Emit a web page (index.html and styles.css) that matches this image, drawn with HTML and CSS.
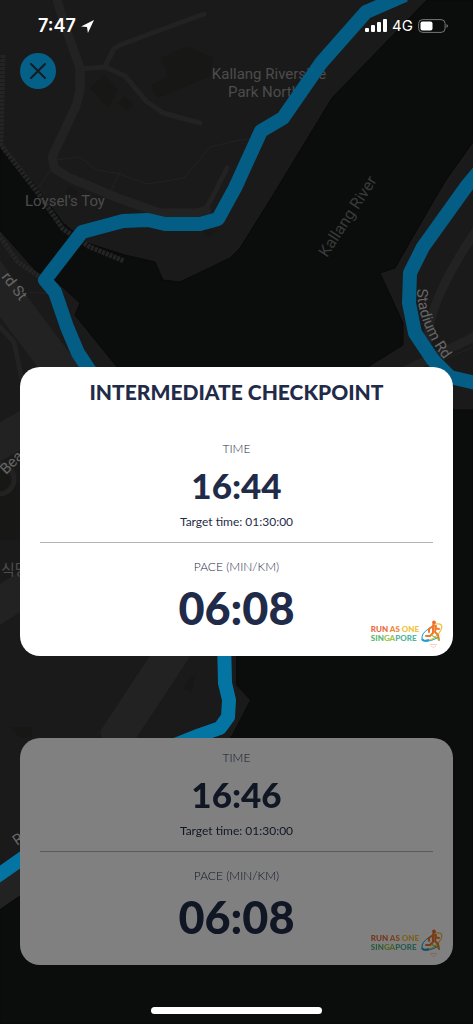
FILE: index.html
```html
<!DOCTYPE html>
<html lang="en">
<head>
<meta charset="utf-8">
<meta name="viewport" content="width=device-width, initial-scale=1">
<title>Intermediate checkpoint</title>
<link rel="stylesheet" href="styles.css">
</head>
<body>
<div class="screen">
  <svg class="map" viewBox="0 0 473 1024" preserveAspectRatio="xMidYMin slice" role="img" aria-label="Map of the route">
    <rect class="land" width="473" height="1024"/>
    <path class="building" d="M161 58L187 46 213 58 210 76 158 98 151 86 168 76ZM104 75L118 90 108 108 90 88ZM124 96L134 104 128 111 118 104ZM192 677L204 670 210 680 202 698 183 688ZM10 727H32V738H20ZM0 470L20 485V540H0ZM68 187L78 190 76 195 65 194ZM200 229L218 230 208 237Z"/>
    <path class="water" d="M427 0L332 98 270 200 240 248 230 258 180 282 163 280 155 262 125 255 87 243 63 223 33 183 0 147V230L38 273 57 282 80 303 75 315 117 367 220 500 236 656V685L250 700 232 735 200 770 20 895 0 910V1024H473V410H455L366 368 403 345V323L380 273 395 268 430 207 446 180 473 142V0Z"/>
    <path class="land" d="M200 656H236V685L250 700 232 735 226 742H180Z"/>
    <g class="roads">
      <path class="road-l" d="M57 0L63 20 80 68V90L76 106 52 157 55 169 70 178 118 198 160 213H195L207 210"/>
      <path class="road-m" d="M80 69L105 67 125 76 146 101 163 113 200 123M105 66L114 49 120 45 204 14M205 210L212 198 227 168"/>
      <path class="road-s" d="M55 160L80 157 97 170 120 174 147 184 184 178 210 147 240 140 266 137M50 171L38 188M120 172L110 193M62 295L30 292"/>
      <path class="road-xl" d="M-14 270L76 390M-10 448L38 420M-8 610L45 575M174 650L118 735M-10 895L65 845"/>
      <path class="road-m" d="M-2 325L14 342 22 380M-2 494A15 15 0 0 0 0 464"/>
      <path class="road-l" d="M428 340Q428 300 480 225M390 378L480 334"/>
      <path class="road-s" d="M373 390L480 344M155 656L98 735"/>
    </g>
    <path class="rail" d="M3 55L1 145 38 193 63 229 90 247 124 261M-2 234L18 262 40 277"/>
    <g class="place" text-anchor="middle">
      <text x="269" y="79">Kallang Riverside</text>
      <text x="264" y="97">Park North</text>
      <text x="65" y="206">Loysel's Toy</text>
    </g>
    <text class="river" transform="translate(327 258) rotate(-57)">Kallang River</text>
    <text class="street" transform="translate(1 277) rotate(52)">rd St</text>
    <text class="street" transform="translate(6 475) rotate(-45)">Bea</text>
    <text class="place" x="1" y="575">식당</text>
    <text class="street" transform="translate(17 846) rotate(-35)">Rd</text>
    <path class="route" d="M405 -5L366 12 321 63 283 118 261 131 235 188 218 219 200 224H165L148 220 123 221 82 232 45 280 55 292 67 327 78 353 96 380"/>
    <path class="route" d="M480 170L466 187 423 247 410 273 409 303 415 333 433 360 450 377 480 384"/>
    <path class="route route-lower" d="M224 640L225 683 229 700 228 717 220 728 200 735 170 747M-10 881L40 846"/>
    <path id="stadium" class="guide" d="M417 289Q417 331 458 377"/>
    <text class="street"><textPath href="#stadium">Stadium Rd</textPath></text>
  </svg>

  <header class="status">
    <div class="clock">
      <time>7:47</time>
      <svg width="13" height="13" viewBox="0 0 13 13" aria-hidden="true"><path fill="currentColor" d="M13 0L0 6.600 6 7 6.900 13Z"/></svg>
    </div>
    <div class="signals">
      <svg width="22" height="14" viewBox="0 0 22 14" aria-hidden="true"><path fill="currentColor" d="M1 9h2q1 0 1 1v2q0 1-1 1H1q-1 0-1-1v-2q0-1 1-1ZM7 6h2q1 0 1 1v5q0 1-1 1H7q-1 0-1-1V7q0-1 1-1ZM13 3h2q1 0 1 1v8q0 1-1 1h-2q-1 0-1-1V4q0-1 1-1ZM19 0h2q1 0 1 1v11q0 1-1 1h-2q-1 0-1-1V1q0-1 1-1Z"/></svg>
      <span>4G</span>
      <svg width="31" height="14" viewBox="0 0 31 14" aria-hidden="true"><rect x=".6" y=".6" width="26.500" height="12.800" rx="4" fill="none" stroke="#777"/><rect x="2.500" y="2.500" width="12" height="9" rx="2" fill="currentColor"/><path d="M28.500 5v4q3-2 0-4Z" fill="#777"/></svg>
    </div>
  </header>

  <nav class="toolbar">
    <button class="close" type="button" aria-label="Close">
      <svg width="16" height="16" viewBox="0 0 16 16" aria-hidden="true"><path d="M1 1L15 15M15 1L1 15"/></svg>
    </button>
  </nav>

  <main class="cards">
    <article class="card">
      <h1 class="title">INTERMEDIATE CHECKPOINT</h1>
      <section class="metric">
        <h2 class="label">TIME</h2>
        <p class="value">16:44</p>
        <p class="target">Target time: 01:30:00</p>
      </section>
      <section class="metric metric-pace">
        <h2 class="label">PACE (MIN/KM)</h2>
        <p class="value value-large">06:08</p>
      </section>
      <div class="brand">
        <p class="brand-name"><span><b class="c-red">RUN</b> <b class="c-orange">AS</b> <b class="c-yellow">ONE</b></span><span><b class="c-green">SIN</b><b class="c-lime">GA</b><b class="c-teal">PORE</b></span></p>
        <svg class="runner" width="22" height="28" viewBox="0 0 22 28" aria-hidden="true">
          <path d="M9 8Q0 13 1 19Q5 24 18 17" fill="none" stroke="#159bc4"/>
          <path d="M4 21Q15 20 20 10Q23 3 15 4" fill="none" stroke="#f3bd32" stroke-width="1.200"/>
          <path d="M1 19Q2 22 8 20" fill="none" stroke="#1a9ed8" stroke-width="2"/>
          <circle cx="13" cy="2.500" r="1.900" fill="#ee6b2d"/>
          <path d="M12 5L15 6 14 12 17 15 18 20M12 6L12 13 9 16 5 16M12 6L8 9 8 12M14 8L18 9" fill="none" stroke="#f0792d" stroke-width="2" stroke-linecap="round" stroke-linejoin="round"/>
          <path d="M10 15Q14 17 19 20" fill="none" stroke="#8cc152" stroke-width="1.200"/>
          <path d="M9 24.500H16M10 26L12.500 27.500 15 26" fill="none" stroke="#fad0c2"/>
        </svg>
      </div>
    </article>

    <article class="card card-dimmed">
      <section class="metric">
        <h2 class="label">TIME</h2>
        <p class="value">16:46</p>
        <p class="target">Target time: 01:30:00</p>
      </section>
      <section class="metric metric-pace">
        <h2 class="label">PACE (MIN/KM)</h2>
        <p class="value value-large">06:08</p>
      </section>
      <div class="brand">
        <p class="brand-name"><span><b class="c-red">RUN</b> <b class="c-orange">AS</b> <b class="c-yellow">ONE</b></span><span><b class="c-green">SIN</b><b class="c-lime">GA</b><b class="c-teal">PORE</b></span></p>
        <svg class="runner" width="22" height="28" viewBox="0 0 22 28" aria-hidden="true">
          <path d="M9 8Q0 13 1 19Q5 24 18 17" fill="none" stroke="#159bc4"/>
          <path d="M4 21Q15 20 20 10Q23 3 15 4" fill="none" stroke="#f3bd32" stroke-width="1.200"/>
          <path d="M1 19Q2 22 8 20" fill="none" stroke="#1a9ed8" stroke-width="2"/>
          <circle cx="13" cy="2.500" r="1.900" fill="#ee6b2d"/>
          <path d="M12 5L15 6 14 12 17 15 18 20M12 6L12 13 9 16 5 16M12 6L8 9 8 12M14 8L18 9" fill="none" stroke="#f0792d" stroke-width="2" stroke-linecap="round" stroke-linejoin="round"/>
          <path d="M10 15Q14 17 19 20" fill="none" stroke="#8cc152" stroke-width="1.200"/>
          <path d="M9 24.500H16M10 26L12.500 27.500 15 26" fill="none" stroke="#fad0c2"/>
        </svg>
      </div>
    </article>
  </main>

  <footer class="home"><div class="home-bar"></div></footer>
</div>
</body>
</html>
```

FILE: styles.css
```css
* {
  box-sizing: border-box;
}

body,
h1,
h2,
p {
  margin: 0;
}

body {
  background: #0b0d0c;
  font-family: Lato, "Liberation Sans", sans-serif;
  color: #1f2b48;
}

.screen {
  position: relative;
  display: flex;
  flex-direction: column;
  min-height: 100vh;
  overflow: hidden;
}

/* Map */
.map {
  position: absolute;
  inset: 0;
  width: 100%;
  height: 100%;
}

.land { fill: #1a1a1a; }
.water { fill: #0b0d0c; stroke: #080908; }
.building { fill: #171715; }

.roads path {
  fill: none;
  stroke: #222;
  stroke-linejoin: round;
  stroke-linecap: round;
}

.roads .road-s { stroke-width: 1; }
.roads .road-m { stroke-width: 5; }
.roads .road-l { stroke-width: 9; }
.roads .road-xl { stroke-width: 34; }

.rail {
  fill: none;
  stroke: #242424;
  stroke-width: 5;
  stroke-dasharray: 3 1;
}

.route {
  fill: none;
  stroke: #045d84;
  stroke-width: 14;
  stroke-linejoin: round;
}

.route-lower { stroke: #0475a3; }
.guide { fill: none; }

.place,
.street,
.river {
  font-family: Roboto, "Noto Sans CJK KR", sans-serif;
  font-size: 15px;
  fill: #4c4c4c;
}

.street { fill: #666; }

.river {
  font-size: 16px;
  fill: #383a39;
}

/* Status bar */
.status {
  position: relative;
  display: flex;
  justify-content: space-between;
  align-items: center;
  padding: 14px 24px 0 38px;
  color: #fff;
  font-family: Inter, sans-serif;
  line-height: 24px;
}

.clock,
.signals {
  display: flex;
  align-items: center;
  gap: 5px;
}

.clock {
  font-size: 18px;
  font-weight: 600;
}

.signals { font-size: 15px; }

/* Close button */
.toolbar {
  position: relative;
  padding: 15px 20px 0;
}

.close {
  display: grid;
  place-items: center;
  width: 36px;
  height: 36px;
  padding: 0;
  border: 0;
  border-radius: 50%;
  background: #056088;
}

.close path {
  stroke: #151c20;
  stroke-width: 2;
  stroke-linecap: round;
}

/* Result cards */
.cards {
  position: relative;
  flex: 1;
  display: flex;
  flex-direction: column;
  justify-content: flex-end;
  gap: 82px;
  padding: 0 20px;
}

.card {
  position: relative;
  padding: 10px 20px 17px;
  border-radius: 20px;
  background: #fff;
  text-align: center;
}

.card-dimmed { filter: brightness(0.5); }

.title {
  padding-bottom: 32px;
  font-size: 21px;
  font-weight: 900;
  line-height: 30px;
}

.metric { padding-bottom: 9px; }

.metric-pace {
  padding: 14px 0 0;
  border-top: 1px solid #b4b4b4;
}

.label {
  font-size: 12px;
  font-weight: 300;
  line-height: 20px;
}

.value {
  font-size: 35px;
  font-weight: 900;
  line-height: 52px;
}

.value-large {
  font-size: 45px;
  line-height: 62px;
}

.target {
  font-size: 12px;
  line-height: 22px;
}

.brand {
  position: absolute;
  right: 10px;
  bottom: 8px;
  display: flex;
  gap: 2px;
}

.brand-name {
  display: grid;
  align-content: center;
  font-size: 8px;
  font-weight: 900;
  line-height: 9px;
  text-align: left;
}

.c-red { color: #ea6a3b; }
.c-orange { color: #f0873a; }
.c-yellow { color: #f2c13c; }
.c-green { color: #5bb574; }
.c-lime { color: #9cc64e; }
.c-teal { color: #53b59c; }

/* Home indicator */
.home {
  position: relative;
  display: flex;
  justify-content: center;
  padding: 42px 0 10px;
}

.home-bar {
  width: 36%;
  height: 7px;
  border-radius: 4px;
  background: #fff;
}
```
